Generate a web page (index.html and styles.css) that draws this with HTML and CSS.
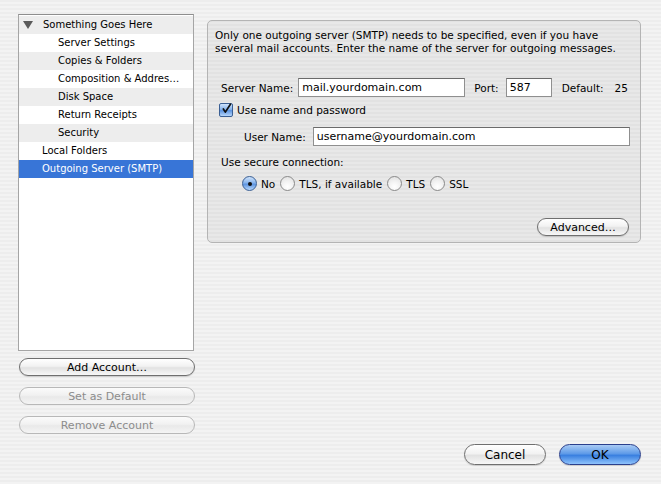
FILE: index.html
```html
<!DOCTYPE html>
<html lang="en">
<head>
  <meta charset="UTF-8">
  <title>Account Settings</title>
  <link rel="stylesheet" href="styles.css">
</head>
<body>

  <div class="window">
    <div class="main">

      <div class="sidebar">
        <ul class="tree">
          <li class="row odd">
            <span class="twisty"></span>Something Goes Here
          </li>
          <li class="row child">Server Settings</li>
          <li class="row child odd">Copies &amp; Folders</li>
          <li class="row child">Composition &amp; Addres…</li>
          <li class="row child odd">Disk Space</li>
          <li class="row child">Return Receipts</li>
          <li class="row child odd">Security</li>
          <li class="row top">Local Folders</li>
          <li class="row top selected">Outgoing Server (SMTP)</li>
        </ul>

        <div class="account-buttons">
          <button class="aqua">Add Account…</button>
          <button class="aqua" disabled>Set as Default</button>
          <button class="aqua" disabled>Remove Account</button>
        </div>
      </div>

      <div class="content">
        <div class="panel">
          <p class="intro">Only one outgoing server (SMTP) needs to be specified, even if you have several mail accounts. Enter the name of the server for outgoing messages.</p>

          <div class="field-row server-row">
            <label>Server Name:</label>
            <input type="text" class="server-name" value="mail.yourdomain.com">
            <label class="port-label">Port:</label>
            <input type="text" class="port" value="587">
            <span class="default-label">Default:</span>
            <span class="default-value">25</span>
          </div>

          <div class="check-row">
            <span class="checkbox">
              <svg width="14" height="14" viewBox="0 0 14 14">
                <polyline points="3,7 5.5,11 12,1" fill="none" stroke="#111" stroke-width="2.2" stroke-linecap="round" stroke-linejoin="round"/>
              </svg>
            </span>
            <span>Use name and password</span>
          </div>

          <div class="field-row user-row">
            <label>User Name:</label>
            <input type="text" class="user-name" value="username@yourdomain.com">
          </div>

          <div class="secure-label">Use secure connection:</div>
          <div class="radio-row">
            <span class="radio checked"></span><span class="radio-text">No</span>
            <span class="radio"></span><span class="radio-text">TLS, if available</span>
            <span class="radio"></span><span class="radio-text">TLS</span>
            <span class="radio"></span><span class="radio-text">SSL</span>
          </div>

          <div class="panel-actions">
            <button class="aqua advanced">Advanced…</button>
          </div>
        </div>
      </div>

    </div>

    <div class="footer">
      <button class="aqua dialog">Cancel</button>
      <button class="aqua dialog default">OK</button>
    </div>
  </div>

</body>
</html>
```

FILE: styles.css
```css
* {
  box-sizing: border-box;
  font-family: "DejaVu Sans", Verdana, sans-serif;
}

body {
  margin: 0;
  font-size: 10px;
  color: #000;
}

.window {
  width: 661px;
  height: 484px;
  display: flex;
  flex-direction: column;
  background: repeating-linear-gradient(#ededed 0, #ededed 2px, #f3f3f3 2px, #f3f3f3 4px);
}

.main {
  display: flex;
  flex: 1;
}

/* left side: account tree + buttons */
.sidebar {
  width: 196px;
  padding: 14px 0 0 18px;
}

.tree {
  list-style: none;
  margin: 0;
  padding: 1px 0 0 0;
  width: 176px;
  height: 337px;
  background: #fff;
  border: 1px solid #a5a5a5;
  border-top-color: #8e8e8e;
}

.tree .row {
  height: 18px;
  line-height: 18px;
  padding-left: 23px;
  white-space: nowrap;
  overflow: hidden;
}

.tree .row.odd {
  background: #ededed;
}

.tree .row:first-child {
  padding-left: 3px;
}

.tree .row.child {
  padding-left: 39px;
}

.tree .row.selected {
  background: #3875d7;
  color: #fff;
}

.twisty {
  display: inline-block;
  width: 0;
  height: 0;
  margin: 0 10px 0 1px;
  border-left: 5px solid transparent;
  border-right: 5px solid transparent;
  border-top: 8px solid #5a5a5a;
  vertical-align: -1px;
}

.account-buttons {
  display: flex;
  flex-direction: column;
  gap: 11px;
  margin-top: 7px;
  padding-left: 1px;
}

/* aqua style buttons */
.aqua {
  height: 18px;
  border: 1px solid #6f6f6f;
  border-radius: 9px;
  background: linear-gradient(#ffffff 0%, #f2f2f2 45%, #e2e2e2 55%, #f7f7f7 100%);
  font-size: 11px;
  color: #000;
  padding: 0;
  box-shadow: 0 1px 1px rgba(0, 0, 0, 0.15);
}

.aqua:disabled {
  border-color: #b8b8b8;
  color: #8c8c8c;
  background: linear-gradient(#fbfbfb 0%, #f1f1f1 45%, #e9e9e9 55%, #f4f4f4 100%);
  box-shadow: none;
}

.account-buttons .aqua {
  width: 176px;
}

/* right side */
.content {
  flex: 1;
  padding: 20px 0 0 11px;
}

.panel {
  width: 434px;
  height: 223px;
  border: 1px solid #b4b4b4;
  border-radius: 5px;
  background: rgba(0, 0, 0, 0.045);
  padding: 8px 0 0 7px;
  display: flex;
  flex-direction: column;
}

.intro {
  margin: 0;
  width: 420px;
  line-height: 13px;
  font-size: 10.5px;
}

.field-row {
  display: flex;
  align-items: center;
}

.field-row input {
  height: 19px;
  border: 1px solid #8f8f8f;
  border-top-color: #6b6b6b;
  background: #fff;
  font-size: 11px;
  padding: 0 0 0 3px;
  margin: 0;
}

.server-row {
  margin-top: 23px;
  padding-left: 6px;
  font-size: 10.5px;
}

.server-name {
  width: 167px;
  margin-left: 5px !important;
}

.port-label {
  margin-left: 9px;
}

.port {
  width: 46px;
  margin-left: 7px !important;
}

.default-label {
  margin-left: 10px;
}

.default-value {
  margin-left: 11px;
}

.check-row {
  display: flex;
  align-items: center;
  margin-top: 6px;
  padding-left: 4px;
  font-size: 10.5px;
}

.checkbox {
  width: 14px;
  height: 14px;
  border: 1px solid #3a5f94;
  border-radius: 2px;
  background: linear-gradient(#cfe3fb 0%, #86b3ec 45%, #5d94e0 55%, #b6d6fb 100%);
  margin-right: 4px;
  display: flex;
}

.checkbox svg {
  margin-top: -2px;
  margin-left: 1px;
}

.user-row {
  margin-top: 10px;
  padding-left: 29px;
  font-size: 10.5px;
}

.user-name {
  width: 317px;
  margin-left: 7px !important;
}

.secure-label {
  margin-top: 10px;
  padding-left: 6px;
  line-height: 13px;
  font-size: 10.5px;
}

.radio-row {
  display: flex;
  align-items: center;
  margin-top: 7px;
  padding-left: 27px;
  font-size: 10.5px;
}

.radio {
  width: 15px;
  height: 15px;
  border-radius: 50%;
  border: 1px solid #8a8a8a;
  background: radial-gradient(circle at 50% 75%, #ffffff 0%, #f4f4f4 40%, #dedede 100%);
  margin-right: 4px;
  position: relative;
}

.radio.checked {
  border-color: #3a5f94;
  background: linear-gradient(#cfe3fb 0%, #86b3ec 45%, #5d94e0 55%, #b6d6fb 100%);
}

.radio.checked::after {
  content: "";
  position: absolute;
  left: 4.5px;
  top: 4.5px;
  width: 4px;
  height: 4px;
  border-radius: 50%;
  background: #111;
}

.radio-text {
  margin-right: 5px;
}

.panel-actions {
  margin-top: auto;
  margin-bottom: 6px;
  display: flex;
  justify-content: flex-end;
  padding-right: 11px;
}

.advanced {
  width: 92px;
}

/* bottom dialog buttons */
.footer {
  display: flex;
  justify-content: flex-end;
  gap: 13px;
  padding: 0 20px 19px 0;
}

.dialog {
  width: 82px;
  height: 21px;
  border-radius: 11px;
  font-size: 12px;
}

.dialog.default {
  border-color: #2a3f8c;
  background: linear-gradient(#a9cbf5 0%, #5f9be8 45%, #3a80e0 55%, #8ec2fb 100%);
}
```
